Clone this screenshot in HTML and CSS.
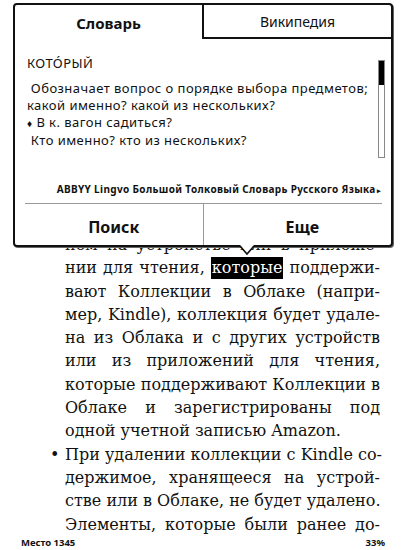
FILE: index.html
```html
<!DOCTYPE html>
<html lang="ru">
<head>
  <meta charset="UTF-8">
  <title>Kindle — Словарь</title>
  <link rel="stylesheet" href="styles.css">
</head>
<body>

  <div class="page">
    <!-- текст книги -->
    <div class="text">
      <div class="line">ном на устройстве или в приложе-</div>
      <div class="line">нии для чтения, <span class="hl">которые</span> поддержи-</div>
      <div class="line">вают Коллекции в Облаке (напри-</div>
      <div class="line">мер, Kindle), коллекция будет удале-</div>
      <div class="line">на из Облака и с других устройств</div>
      <div class="line">или из приложений для чтения,</div>
      <div class="line">которые поддерживают Коллекции в</div>
      <div class="line">Облаке и зарегистрированы под</div>
      <div class="line last">одной учетной записью Amazon.</div>
      <div class="line"><span class="bullet">•</span>При удалении коллекции с Kindle со-</div>
      <div class="line">держимое, хранящееся на устрой-</div>
      <div class="line">стве или в Облаке, не будет удалено.</div>
      <div class="line">Элементы, которые были ранее до-</div>
    </div>

    <div class="footer">
      <span>Место 1345</span>
      <span>33%</span>
    </div>
  </div>

  <!-- всплывающее окно словаря -->
  <div class="popup">
    <div class="tabs">
      <div class="tab active">Словарь</div>
      <div class="tab">Википедия</div>
    </div>

    <div class="dict">
      <div class="entry">
        <div class="word">КОТО́РЫЙ</div>
        <div class="defs">
          <div>&nbsp;Обозначает вопрос о порядке выбора предметов;</div>
          <div>какой именно? какой из нескольких?</div>
          <div><span class="diamond">♦</span> В к. вагон садиться?</div>
          <div>&nbsp;Кто именно? кто из нескольких?</div>
        </div>
      </div>
      <div class="scroll"><div class="thumb"></div></div>
    </div>

    <div class="source">ABBYY Lingvo Большой Толковый Словарь Русского Языка<span class="arrow">▸</span></div>
    <div class="rule"></div>

    <div class="actions">
      <div class="action">Поиск</div>
      <div class="action">Еще</div>
    </div>

    <svg class="pointer" width="16" height="11" viewBox="0 0 16 11">
      <polygon points="1,0 8,9 15,0" fill="#fff"/>
      <polyline points="1,1 8,9 15,1" fill="none" stroke="#111" stroke-width="1.6"/>
    </svg>
  </div>

</body>
</html>
```

FILE: styles.css
```css
/* ====== страница ====== */
body {
  margin: 0;
  background: #fff;
  color: #111;
}
.page {
  height: 550px;
  display: flex;
  flex-direction: column;
}
.text {
  padding: 233px 27px 0 65px;
  font-family: "DejaVu Serif", serif;
  font-size: 16px;
  line-height: 23.3px;
}
.line {
  text-align: justify;
  text-align-last: justify;
  white-space: nowrap;
}
.line.last {
  text-align-last: left;
}
.hl {
  background: #000;
  color: #fff;
  padding: 1px 1px 2px;
}
.bullet {
  display: inline-block;
  width: 15px;
  margin-left: -15px;
}
.footer {
  margin-top: auto;
  display: flex;
  justify-content: space-between;
  padding: 0 22px 7px 21px;
  font-family: "Noto Sans", sans-serif;
  font-weight: bold;
  font-size: 9.5px;
  line-height: 14px;
}

/* ====== попап ====== */
.popup {
  position: absolute;
  left: 13px;
  top: 3px;
  width: 380px;
  height: 244px;
  box-sizing: border-box;
  border: 2px solid #111;
  border-radius: 4px;
  background: #fff;
  box-shadow: 1px 1px 0 #666;
  font-family: "Noto Sans", sans-serif;
  display: flex;
  flex-direction: column;
}
.tabs {
  display: flex;
  height: 34px;
  flex-shrink: 0;
}
.tab {
  flex: 1;
  display: flex;
  align-items: center;
  justify-content: center;
  font-size: 14px;
  box-sizing: border-box;
  border-bottom: 2px solid #111;
  border-left: 2px solid #111;
  padding-top: 1px;
}
.tab.active {
  flex: 0 0 187px;
  border: none;
  font-weight: bold;
  font-size: 15px;
}

.dict {
  display: flex;
  height: 143px;
  flex-shrink: 0;
}
.entry {
  flex: 1;
  padding: 16px 0 0 12px;
  font-size: 13px;
  letter-spacing: 0.45px;
  line-height: 17px;
}
.defs {
  margin-top: 8px;
}
.diamond {
  font-size: 10px;
}
.scroll {
  width: 5px;
  height: 96px;
  margin: 21px 6px 0 0;
  border: 1px solid #888;
}
.thumb {
  height: 24px;
  background: #000;
}

.source {
  height: 14px;
  line-height: 14px;
  padding-right: 10px;
  text-align: right;
  font-size: 10px;
  letter-spacing: 0.35px;
  font-weight: bold;
}
.arrow {
  font-size: 7px;
  margin-left: 1px;
}
.rule {
  margin: 7px 9px 0 10px;
  border-top: 1px solid #999;
}
.actions {
  flex: 1;
  display: flex;
}
.action {
  flex: 1;
  display: flex;
  align-items: center;
  justify-content: center;
  padding: 4px 0 0 10px;
  font-size: 16px;
  font-weight: bold;
}
.action + .action {
  border-left: 1px solid #999;
}
.pointer {
  position: absolute;
  left: 224px;
  bottom: -11px;
}
```
